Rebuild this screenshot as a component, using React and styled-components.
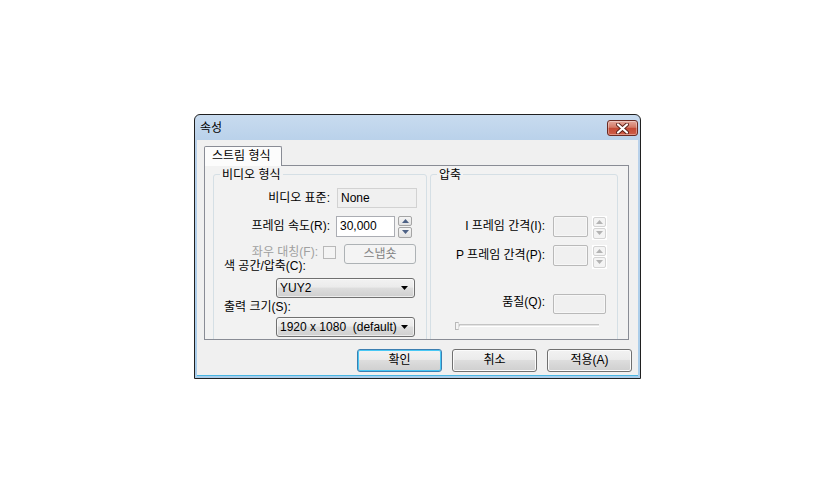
import React from "react";
import styled, { createGlobalStyle } from "styled-components";

const GlobalStyle = createGlobalStyle`
  html, body {
    margin: 0;
    padding: 0;
    background: #fff;
  }
  body {
    font-family: "Liberation Sans", "Noto Sans CJK KR", sans-serif;
    font-size: 12px;
    color: #000;
  }
`;

const Page = styled.div`
  height: 100vh;
  display: flex;
  align-items: center;
  justify-content: center;
`;

const Window = styled.div`
  width: 447px;
  height: 265px;
  box-sizing: border-box;
  border: 1px solid #202020;
  border-radius: 6px 6px 0 0;
  background: linear-gradient(#c8dbef 0px, #b9d1ea 26px, #a9cdea 100%);
  padding: 0 2px 2px;
  display: flex;
  flex-direction: column;
`;

const TitleBar = styled.div`
  height: 25px;
  flex: none;
  display: flex;
  align-items: center;
  justify-content: space-between;
  padding: 2px 0 0 3px;
  box-sizing: border-box;
`;

const Title = styled.span`
  line-height: 16px;
`;

const CloseButton = styled.div`
  width: 31px;
  height: 16px;
  box-sizing: border-box;
  border: 1px solid #6b2a22;
  border-radius: 3px;
  background: linear-gradient(#e4a99d 0%, #d47a67 45%, #c44a35 52%, #cf5e49 100%);
  box-shadow: inset 0 0 0 1px rgba(255, 255, 255, 0.35);
  display: flex;
  align-items: center;
  justify-content: center;
`;

const Client = styled.div`
  flex: 1;
  background: #f0f0f0;
  padding: 6px 0 0 7px;
  display: flex;
  flex-direction: column;
  border-bottom: 1px solid #49b6e2;
`;

const TabStrip = styled.div`
  display: flex;
`;

const Tab = styled.div`
  width: 78px;
  height: 20px;
  box-sizing: border-box;
  border: 1px solid #898c95;
  border-bottom: none;
  border-radius: 2px 2px 0 0;
  background: #fcfcfc;
  margin-bottom: -1px;
  position: relative;
  z-index: 1;
  padding-left: 7px;
  line-height: 18px;
`;

const Panel = styled.div`
  width: 425px;
  height: 175px;
  box-sizing: border-box;
  border: 1px solid #898c95;
  background: #f2f2f2;
  padding: 2px 0 0 8px;
  display: flex;
  gap: 3px;
  align-items: flex-start;
  overflow: hidden;
`;

const Group = styled.fieldset`
  margin: 0;
  padding: 0;
  min-width: 0;
  width: ${(p) => p.$w}px;
  height: 200px;
  box-sizing: border-box;
  border: 1px solid #d5dfe5;
  border-radius: 3px;
  flex: none;
`;

const Legend = styled.legend`
  margin-left: 6px;
  padding: 0 2px;
  line-height: 14px;
`;

const GroupBody = styled.div`
  display: flex;
  flex-direction: column;
`;

const Row = styled.div`
  display: flex;
  align-items: flex-start;
  margin-top: ${(p) => p.$mt}px;
`;

const Label = styled.span`
  width: ${(p) => p.$w}px;
  flex: none;
  text-align: right;
  white-space: nowrap;
  line-height: ${(p) => p.$lh || 20}px;
  color: ${(p) => (p.$disabled ? "#a0a0a0" : "#000")};
`;

const FieldLabel = styled.div`
  padding-left: 10px;
  line-height: 12px;
  margin-top: ${(p) => p.$mt}px;
  white-space: nowrap;
`;

const Edit = styled.div`
  flex: none;
  width: ${(p) => p.$w}px;
  height: ${(p) => p.$h || 21}px;
  margin-left: ${(p) => p.$ml}px;
  box-sizing: border-box;
  padding-left: 3px;
  line-height: ${(p) => (p.$h || 21) - 2}px;
  border: 1px solid ${(p) => (p.$ro ? "#d2d2d2" : p.$disabled ? "#b9b9b9" : "#abadb3")};
  border-radius: ${(p) => (p.$disabled ? 2 : 0)}px;
  background: ${(p) => (p.$ro || p.$disabled ? "#f0f0f0" : "#fff")};
  box-shadow: ${(p) => (p.$disabled ? "inset 0 0 0 1px #f7f7f7" : "none")};
`;

const Spin = styled.div`
  flex: none;
  width: ${(p) => p.$w}px;
  height: ${(p) => p.$h}px;
  margin-left: ${(p) => p.$ml}px;
  display: flex;
  flex-direction: column;
  gap: 1px;
  box-sizing: border-box;
  padding: ${(p) => (p.$disabled ? 1 : 0)}px;
  background: ${(p) => (p.$disabled ? "#fff" : "transparent")};
`;

const SpinButton = styled.div`
  flex: 1;
  box-sizing: border-box;
  border: 1px solid ${(p) => (p.$disabled ? "#d4d4d4" : "#a5a5a5")};
  border-radius: 2px;
  background: ${(p) =>
    p.$disabled ? "#f4f4f4" : "linear-gradient(#f5f5f5, #e2e2e2)"};
  display: flex;
  align-items: center;
  justify-content: center;
`;

const CheckBox = styled.div`
  flex: none;
  width: 13px;
  height: 13px;
  margin: 2px 0 0 5px;
  box-sizing: border-box;
  border: 1px solid #b8b8b8;
  background: #f4f4f4;
`;

const SnapButton = styled.div`
  flex: none;
  width: 72px;
  height: 20px;
  margin-left: 8px;
  box-sizing: border-box;
  border: 1px solid #adb2b5;
  border-radius: 3px;
  background: #f4f4f4;
  color: #838383;
  text-align: center;
  line-height: 18px;
`;

const Combo = styled.div`
  width: 139px;
  height: 20px;
  margin: ${(p) => p.$mt}px 0 0 62px;
  box-sizing: border-box;
  border: 1px solid #707070;
  border-radius: 3px;
  background: linear-gradient(#f2f2f2 0%, #ebebeb 45%, #dddddd 50%, #cfcfcf 100%);
  box-shadow: inset 0 0 0 1px rgba(255, 255, 255, 0.6);
  display: flex;
  align-items: center;
  padding: 0 6px 0 3px;
`;

const ComboText = styled.span`
  flex: 1;
  overflow: hidden;
  white-space: pre;
  line-height: 18px;
`;

const Slider = styled.div`
  display: flex;
  align-items: center;
  margin: 8px 0 0 24px;
  width: 144px;
  height: 8px;
`;

const Thumb = styled.div`
  width: 4px;
  height: 8px;
  box-sizing: border-box;
  border: 1px solid #b8b8b8;
  border-right-color: #dcdcdc;
  background: #f4f4f4;
`;

const Track = styled.div`
  flex: 1;
  height: 3px;
  box-sizing: border-box;
  border-top: 1px solid #c4c4c4;
  border-bottom: 1px solid #ffffff;
  background: #e4e4e4;
  border-left: 1px solid #c4c4c4;
`;

const ButtonRow = styled.div`
  display: flex;
  justify-content: flex-end;
  gap: 10px;
  padding-right: 6px;
  margin-top: 9px;
`;

const Button = styled.div`
  width: 85px;
  height: 23px;
  box-sizing: border-box;
  border: 1px solid ${(p) => (p.$default ? "#3c7fb1" : "#707070")};
  border-radius: 3px;
  background: linear-gradient(#f2f2f2 0%, #ebebeb 45%, #dddddd 50%, #cfcfcf 100%);
  box-shadow: inset 0 0 0 1px ${(p) => (p.$default ? "#48c8f5" : "#fbfbfb")};
  text-align: center;
  line-height: 21px;
`;

const Arrow = ({ up, color }) => (
  <svg width="7" height="4" viewBox="0 0 7 4">
    <polygon points={up ? "3.5,0 7,4 0,4" : "0,0 7,0 3.5,4"} fill={color} />
  </svg>
);

const SpinBox = ({ w, h, ml, disabled }) => (
  <Spin $w={w} $h={h} $ml={ml} $disabled={disabled}>
    <SpinButton $disabled={disabled}>
      <Arrow up color={disabled ? "#b3b3b3" : "#4d6185"} />
    </SpinButton>
    <SpinButton $disabled={disabled}>
      <Arrow color={disabled ? "#b3b3b3" : "#4d6185"} />
    </SpinButton>
  </Spin>
);

const CloseIcon = () => (
  <svg width="13" height="11" viewBox="0 0 13 11">
    <path d="M2 1.5 L11 9.5 M11 1.5 L2 9.5" stroke="#5a1f18" strokeWidth="4" strokeLinecap="round" />
    <path d="M2 1.5 L11 9.5 M11 1.5 L2 9.5" stroke="#fff" strokeWidth="2.2" strokeLinecap="round" />
  </svg>
);

export default function App() {
  return (
    <Page>
      <GlobalStyle />
      <Window>
        <TitleBar>
          <Title>속성</Title>
          <CloseButton>
            <CloseIcon />
          </CloseButton>
        </TitleBar>
        <Client>
          <TabStrip>
            <Tab>스트림 형식</Tab>
          </TabStrip>
          <Panel>
            <Group $w={214}>
              <Legend>비디오 형식</Legend>
              <GroupBody>
                <Row $mt={6}>
                  <Label $w={116}>비디오 표준:</Label>
                  <Edit $w={80} $h={20} $ml={7} $ro>
                    None
                  </Edit>
                </Row>
                <Row $mt={8}>
                  <Label $w={116} $lh={21}>프레임 속도(R):</Label>
                  <Edit $w={59} $ml={6}>30,000</Edit>
                  <SpinBox w={14} h={22} ml={3} />
                </Row>
                <Row $mt={6}>
                  <Label $w={104} $lh={16} $disabled>좌우 대칭(F):</Label>
                  <CheckBox />
                  <SnapButton>스냅숏</SnapButton>
                </Row>
                <FieldLabel $mt={-4}>색 공간/압축(C):</FieldLabel>
                <Combo $mt={6}>
                  <ComboText>YUY2</ComboText>
                  <Arrow color="#000" />
                </Combo>
                <FieldLabel $mt={3}>출력 크기(S):</FieldLabel>
                <Combo $mt={4}>
                  <ComboText>{"1920 x 1080  (default)"}</ComboText>
                  <Arrow color="#000" />
                </Combo>
              </GroupBody>
            </Group>
            <Group $w={188}>
              <Legend>압축</Legend>
              <GroupBody>
                <Row $mt={34}>
                  <Label $w={114} $lh={21}>I 프레임 간격(I):</Label>
                  <Edit $w={35} $ml={8} $disabled />
                  <SpinBox w={15} h={24} ml={4} disabled />
                </Row>
                <Row $mt={5}>
                  <Label $w={114} $lh={21}>P 프레임 간격(P):</Label>
                  <Edit $w={35} $ml={8} $disabled />
                  <SpinBox w={15} h={24} ml={4} disabled />
                </Row>
                <Row $mt={25}>
                  <Label $w={114} $lh={16}>품질(Q):</Label>
                  <Edit $w={53} $h={20} $ml={8} $disabled />
                </Row>
                <Slider>
                  <Thumb />
                  <Track />
                </Slider>
              </GroupBody>
            </Group>
          </Panel>
          <ButtonRow>
            <Button $default>확인</Button>
            <Button>취소</Button>
            <Button>적용(A)</Button>
          </ButtonRow>
        </Client>
      </Window>
    </Page>
  );
}
